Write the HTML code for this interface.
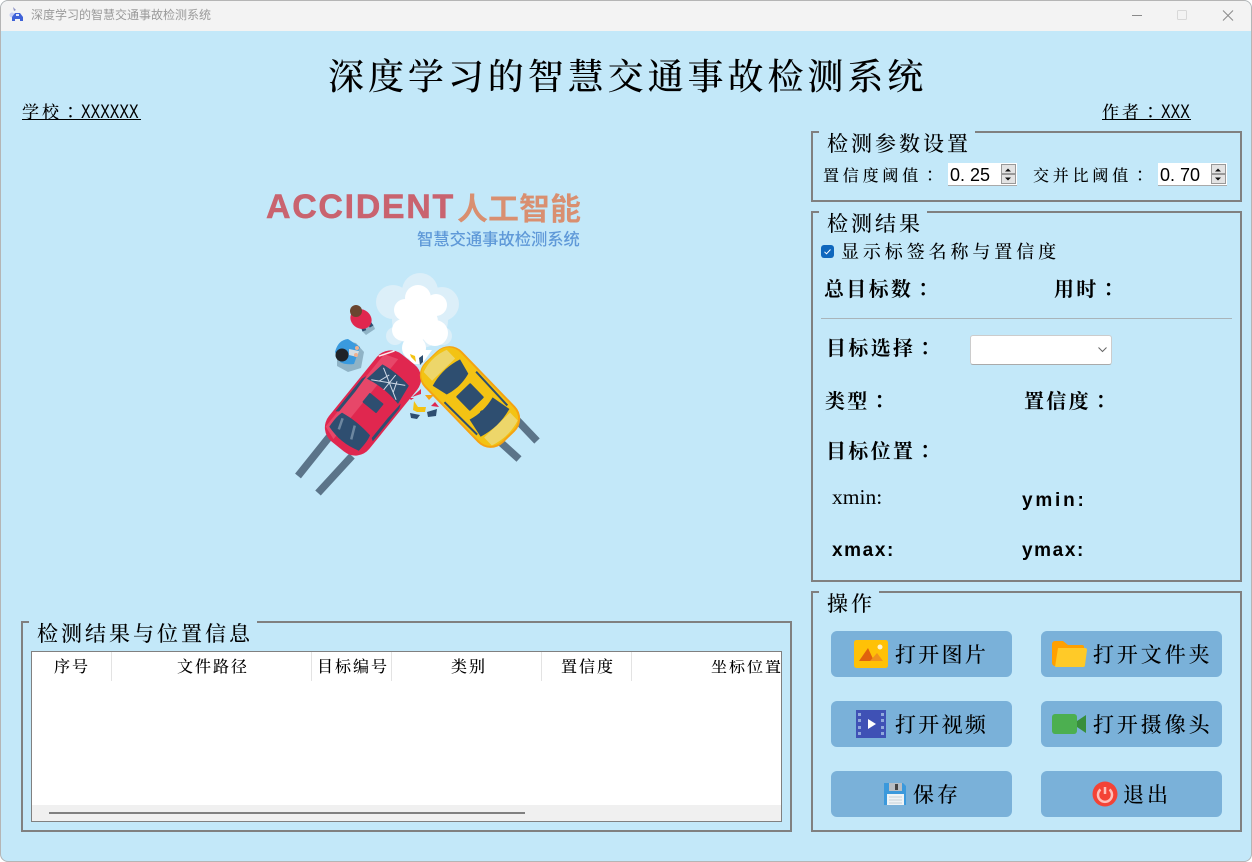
<!DOCTYPE html>
<html><head><meta charset="utf-8"><style>
html,body{margin:0;padding:0;background:#fff;}
#w{position:relative;width:1252px;height:862px;overflow:hidden;background:#c3e8f9;border-radius:8px;box-sizing:border-box;box-shadow:inset 0 0 0 1px #b5b5b5;font-family:"Liberation Serif","Noto Serif CJK SC",serif;font-weight:500;color:#000}
#tb{position:absolute;left:1px;top:1px;width:1250px;height:30px;background:#f3f3f3;border-radius:7px 7px 0 0}
.t{position:absolute;white-space:nowrap;line-height:1}
.b{font-weight:700}
.c{font-family:"Noto Serif CJK TC",serif}
.g{position:absolute;border:2px solid #808080;box-sizing:border-box}
.cap{position:absolute;height:6px;background:#c3e8f9}
.btn{position:absolute;width:181px;height:46px;background:#7ab1d9;border-radius:6px}
.spin{position:absolute;top:163px;width:69px;height:23px;background:#fff;border-bottom:1px solid #aaa;box-sizing:border-box}
.spin i{position:absolute;right:1px;width:15px;height:10px;background:#e3e3e3;border:1px solid #999;box-sizing:border-box}
.sep{position:absolute;top:652px;width:1px;height:29px;background:#e3e3e3}
.h{font-size:16px;letter-spacing:2px;top:660px}
.m{position:absolute;top:102.500px;font-family:"Liberation Mono",monospace;font-size:16px;font-weight:400;line-height:1;transform:scaleY(1.25);transform-origin:0 0}
.l{font-family:"Liberation Sans",sans-serif;font-weight:700;font-size:19px;letter-spacing:1.600px}
.n{font-family:"Liberation Sans",sans-serif;font-weight:400;font-size:18px;top:166px}
svg{position:absolute;overflow:visible}
</style></head><body><div id="w">
<div id="tb"></div>
<svg style="left:9px;top:6px" width="16" height="16" viewBox="0 0 16 16"><path d="M4 1l3 3-2 1z" fill="#8a8fc4"/><circle cx="3" cy="9" r="2.500" fill="#c5cdf5"/><path d="M3 15V11l3-4h5l3 4v4h-3v-2H6v2z" fill="#3f62d8"/><rect x="7" y="8" width="3" height="2" fill="#dfe6ff"/></svg>
<div class="t" style="left:31px;top:9px;font:12px/1 'Liberation Sans','Noto Sans CJK SC',sans-serif;color:#9a9a9a">深度学习的智慧交通事故检测系统</div>
<svg style="left:1130px;top:8px" width="110" height="16"><path d="M2 7.500H12" stroke="#8a8a8a" stroke-width="1"/><rect x="47.500" y="2.500" width="9" height="9" rx="1" fill="none" stroke="#d8d8d8"/><path d="M93 2.500l10 10M103 2.500l-10 10" stroke="#8a8a8a" stroke-width="1"/></svg>

<div class="t" style="left:328px;top:59px;font-size:36px;letter-spacing:3.950px">深度学习的智慧交通事故检测系统</div>
<div class="t" style="left:22px;top:102px;font-size:17px;letter-spacing:3px">学校<span class="c">：</span></div>
<div class="m" style="left:81px">XXXXXX</div>
<div style="position:absolute;left:22px;top:119px;width:119px;height:1px;background:#000"></div>
<div class="t" style="left:1102px;top:102px;font-size:17px;letter-spacing:3px">作者<span class="c">：</span></div>
<div class="m" style="left:1161px">XXX</div>
<div style="position:absolute;left:1102px;top:119px;width:89px;height:1px;background:#000"></div>

<div class="t" style="left:266px;top:190px;font:700 34px/1 'Liberation Sans',sans-serif;letter-spacing:1.650px;color:#c9636f;-webkit-text-stroke:.5px #c9636f">ACCIDENT</div>
<div class="t" style="left:457px;top:191px;font:700 31px/1 'Noto Sans CJK SC',sans-serif;color:#d98f70">人工智能</div>
<div class="t" style="left:417px;top:230px;font:500 16.300px/1 'Noto Sans CJK SC',sans-serif;color:#5f99d8">智慧交通事故检测系统</div>

<svg style="left:0;top:0" width="1252" height="862" viewBox="0 0 1252 862">
 <g fill="#dceff9"><circle cx="420" cy="291" r="18"/><circle cx="393" cy="302" r="17"/><circle cx="442" cy="304" r="17"/><circle cx="395" cy="336" r="9"/><circle cx="443" cy="336" r="9"/><circle cx="420" cy="320" r="28"/></g>
 <g fill="#fff"><circle cx="418" cy="298" r="13"/><circle cx="436" cy="305" r="11"/><circle cx="405" cy="310" r="11"/><circle cx="420" cy="322" r="18"/><circle cx="403" cy="330" r="11"/><circle cx="435" cy="333" r="13"/><circle cx="414" cy="348" r="12"/><path d="M404 350H432L422 364H412z"/></g>
 <g stroke="#5b7489" stroke-width="7.500" fill="none"><path d="M330 436L298 476M352 456L318 493M517 420L537 441M498 440L519 459"/></g>
 <!-- red car -->
 <g transform="translate(373 403) rotate(-51)">
  <rect x="-56" y="-26" width="112" height="52" rx="18" fill="#e0274f"/>
  <path d="M-48 -22L45 -22L50 -8H-53z" fill="#e8506f" opacity=".8"/>
  <path d="M-46 -19C-36 -20 -30 -19 -27 -18C-25 -6 -25 6 -27 18C-30 19 -36 20 -46 19C-50 6 -50 -6 -46 -19z" fill="#2e4e70"/>
  <rect x="-6" y="-9" width="12" height="18" rx="1" fill="#2e4e70"/>
  <path d="M15 -20L36 -17C38 -6 38 6 36 17L15 20C18 6 18 -6 15 -20z" fill="#2e4e70"/>
  <path d="M26 0L17 -16M26 0L34 -14M26 0L17 16M26 0L34 14M17 0H36M21 -9L32 -5M21 9L32 5" stroke="#cfd8e6" stroke-width="1"/>
  <path d="M-30 -24H12L17 -22L-2 -21H-28zM-30 24H12L17 22L-2 21H-28z" fill="#2e4e70"/>
  <path d="M40 -25l14 9" stroke="#fff" stroke-width="1.500" fill="none" opacity=".9"/>
  <path d="M-42 -10L-31 -14M-42 6L-29 0" stroke="#6d87a0" stroke-width="2.500"/>
 </g>
 <!-- yellow car -->
 <g transform="translate(470 397) rotate(46)">
  <rect x="-56" y="-26" width="112" height="52" rx="18" fill="#f5a313"/>
  <rect x="-55" y="-24" width="109" height="48" rx="16" fill="#f3c314"/>
  <path d="M-50 -16H-38V16H-50C-54 6 -54 -6 -50 -16zM39 -18H50C54 -6 54 6 50 18H39z" fill="#edd66a"/>
  <path d="M-34 -19L-18 -15C-15 -5 -15 5 -18 15L-34 19C-38 6 -38 -6 -34 -19z" fill="#2e4e70"/>
  <path d="M16 -16L36 -20C40 -6 40 6 36 20L16 16C19 5 19 -5 16 -16z" fill="#2e4e70"/>
  <rect x="-10" y="-10" width="20" height="20" rx="1" fill="#2e4e70"/>
  <path d="M-14 -22L32 -21M-14 22L32 21" stroke="#2e4e70" stroke-width="2"/>
  <ellipse cx="12" cy="5" rx="2" ry="1.500" fill="#2e4e70" transform="rotate(-90 14 0)"/>
 </g>
 <!-- debris -->
 <path d="M410 354l5 2 1 6-5-5z" fill="#f3c314"/><path d="M419 358l4-3 0 7-3 3z" fill="#2e4e70"/><path d="M421 389l-9 8 9-3z" fill="#e0274f"/><path d="M425 395h9l-5 5z" fill="#f5a313"/><path d="M414 401l4 6h8l-1 5h-8l-4-2z" fill="#f3c314"/><path d="M431 406l4-4 4 5z" fill="#e0274f"/><path d="M410 413l10 2-3 4-6-1z" fill="#2e4e70"/><path d="M427 412l10-3-1 7-8 1z" fill="#2e4e70"/><path d="M414 398l-3 2-2 -2z" fill="#e0274f"/>
 <!-- people -->
 <path d="M362 326l11-2 2 5-9 6-4-4z" fill="#8fb3c6"/>
 <rect x="361" y="324" width="4" height="7" fill="#2e4e70" transform="rotate(-20 363 327)"/><rect x="368" y="321" width="4" height="6" fill="#2e4e70" transform="rotate(-30 370 324)"/>
 <ellipse cx="361" cy="319" rx="11" ry="9.500" fill="#e0274f" transform="rotate(30 361 319)"/>
 <circle cx="356" cy="311" r="6" fill="#6a4530"/>
 <path d="M337 354L345 341L356 343L364 352L361 368L348 372L337 366z" fill="#8fb3c6"/>
 <path d="M335 352Q338 340 348 339L360 347L354 364Q345 365 340 362z" fill="#3a9ade"/>
 <circle cx="342" cy="355" r="6.500" fill="#1f2328"/><path d="M349 349l10 2-2 6-8-2z" fill="#d5dde3"/><circle cx="357" cy="348" r="2" fill="#eeb190"/><circle cx="356" cy="355" r="2" fill="#eeb190"/>
</svg>

<!-- Table group -->
<div class="g" style="left:21px;top:621px;width:771px;height:211px"></div>
<div class="cap" style="left:29px;top:620px;width:228px"></div>
<div class="t" style="left:37px;top:624px;font-size:21px;letter-spacing:3px">检测结果与位置信息</div>
<div style="position:absolute;left:31px;top:651px;width:751px;height:171px;background:#fff;border:1px solid #808080;box-sizing:border-box;overflow:hidden">
 <div style="position:absolute;left:0;bottom:0;width:100%;height:16px;background:#f0f0f0"></div>
 <div style="position:absolute;left:17px;top:160px;width:476px;height:2px;background:#808080"></div>
</div>
<div class="sep" style="left:111px"></div><div class="sep" style="left:311px"></div><div class="sep" style="left:391px"></div><div class="sep" style="left:541px"></div><div class="sep" style="left:631px"></div>
<div class="t h" style="left:54px">序号</div>
<div class="t h" style="left:177px">文件路径</div>
<div class="t h" style="left:317px">目标编号</div>
<div class="t h" style="left:451px">类别</div>
<div class="t h" style="left:561px">置信度</div>
<div class="t h" style="left:711px;width:70px;overflow:hidden">坐标位置</div>

<!-- Params -->
<div class="g" style="left:811px;top:131px;width:431px;height:71px"></div>
<div class="cap" style="left:819px;top:130px;width:156px"></div>
<div class="t" style="left:827px;top:134px;font-size:21px;letter-spacing:3px">检测参数设置</div>
<div class="t" style="left:823px;top:167px;font-size:16px;letter-spacing:3.800px">置信度阈值<span class="c">：</span></div>
<div class="spin" style="left:948px"><i style="top:1px"></i><i style="top:11px"></i></div>
<div class="t n" style="left:950px">0.<span style="margin-left:5px">25</span></div>
<svg style="left:1002px;top:166px" width="12" height="18"><path d="M3 5.500h6l-3-3zM3 11.500h6l-3 3z" fill="#111"/></svg>
<div class="t" style="left:1033px;top:167px;font-size:16px;letter-spacing:3.800px">交并比阈值<span class="c">：</span></div>
<div class="spin" style="left:1158px"><i style="top:1px"></i><i style="top:11px"></i></div>
<div class="t n" style="left:1160px">0.<span style="margin-left:5px">70</span></div>
<svg style="left:1212px;top:166px" width="12" height="18"><path d="M3 5.500h6l-3-3zM3 11.500h6l-3 3z" fill="#111"/></svg>

<!-- Result -->
<div class="g" style="left:811px;top:211px;width:431px;height:371px"></div>
<div class="cap" style="left:819px;top:210px;width:108px"></div>
<div class="t" style="left:827px;top:214px;font-size:21px;letter-spacing:3px">检测结果</div>
<div style="position:absolute;left:821px;top:245px;width:13px;height:13px;border-radius:3px;background:#0f67bd"></div>
<svg style="left:821px;top:245px" width="13" height="13"><path d="M3.500 6.800l2 2 4-4.300" fill="none" stroke="#fff" stroke-width="1"/></svg>
<div class="t" style="left:841px;top:243px;font-size:18px;letter-spacing:3.900px">显示标签名称与置信度</div>
<div class="t b" style="left:824px;top:278px;font-size:20px;letter-spacing:2.300px">总目标数<span class="c">：</span></div>
<div class="t b" style="left:1054px;top:278px;font-size:20px;letter-spacing:2.300px">用时<span class="c">：</span></div>
<div style="position:absolute;left:821px;top:318px;width:411px;height:1px;background:#a9b4ba"></div>
<div class="t b" style="left:826px;top:337px;font-size:20px;letter-spacing:2.300px">目标选择<span class="c">：</span></div>
<div style="position:absolute;left:970px;top:335px;width:142px;height:30px;background:#fff;border:1px solid #ccc;border-bottom-color:#aaa;border-radius:3px;box-sizing:border-box"></div>
<svg style="left:1098px;top:346px" width="10" height="8"><path d="M.5 1.500l4 4 4-4" fill="none" stroke="#666" stroke-width="1"/></svg>
<div class="t b" style="left:825px;top:390px;font-size:20px;letter-spacing:2.300px">类型<span class="c">：</span></div>
<div class="t b" style="left:1024px;top:390px;font-size:20px;letter-spacing:2.300px">置信度<span class="c">：</span></div>
<div class="t b" style="left:826px;top:440px;font-size:20px;letter-spacing:2.300px">目标位置<span class="c">：</span></div>
<div class="t" style="left:832px;top:487px;font:21.500px/1 'Liberation Serif',serif">xmin:</div>
<div class="t l" style="left:1022px;top:491px;letter-spacing:2.800px">ymin:</div>
<div class="t l" style="left:832px;top:541px">xmax:</div>
<div class="t l" style="left:1022px;top:541px">ymax:</div>

<!-- Ops -->
<div class="g" style="left:811px;top:591px;width:431px;height:241px"></div>
<div class="cap" style="left:819px;top:590px;width:60px"></div>
<div class="t" style="left:827px;top:594px;font-size:21px;letter-spacing:3px">操作</div>

<div class="btn" style="left:831px;top:631px"></div><div class="btn" style="left:1041px;top:631px"></div>
<div class="btn" style="left:831px;top:701px"></div><div class="btn" style="left:1041px;top:701px"></div>
<div class="btn" style="left:831px;top:771px"></div><div class="btn" style="left:1041px;top:771px"></div>

<svg style="left:854px;top:640px" width="34" height="28" viewBox="0 0 34 28"><rect width="34" height="28" rx="2.500" fill="#ffc107"/><path d="M5 21L14 8L20 21z" fill="#e0620d"/><path d="M16 21L23 13L29 21z" fill="#f0921c"/><circle cx="26" cy="7" r="2.500" fill="#fff3cf"/></svg>
<svg style="left:1052px;top:640px" width="36" height="28" viewBox="0 0 36 28"><path d="M0 4a3 3 0 0 1 3-3H11L16 5H30a2 2 0 0 1 2 2V26H3a3 3 0 0 1-3-3z" fill="#ffa000"/><path d="M6 8H33a2 2 0 0 1 2 2L33 25a2 2 0 0 1-2 2H3z" fill="#ffca28"/></svg>
<svg style="left:856px;top:710px" width="30" height="28" viewBox="0 0 30 28"><rect width="30" height="28" fill="#3f51b5"/><g fill="#8fa8dc"><rect x="2" y="3" width="3" height="3"/><rect x="2" y="9" width="3" height="3"/><rect x="2" y="16" width="3" height="3"/><rect x="2" y="22" width="3" height="3"/><rect x="25" y="3" width="3" height="3"/><rect x="25" y="9" width="3" height="3"/><rect x="25" y="16" width="3" height="3"/><rect x="25" y="22" width="3" height="3"/></g><path d="M12 9L20 14 12 19z" fill="#fff"/></svg>
<svg style="left:1052px;top:714px" width="34" height="20" viewBox="0 0 34 20"><rect width="25" height="20" rx="3" fill="#4caf50"/><path d="M25 7L34 1V19L25 13z" fill="#388e3c"/></svg>
<svg style="left:884px;top:783px" width="22" height="22" viewBox="0 0 22 22"><path d="M0 0H19L22 3V22H0z" fill="#3b99dc"/><rect x="5" y="0" width="13" height="8" fill="#b8bec4"/><rect x="11" y="1" width="3" height="6" fill="#444"/><rect x="3" y="11" width="17" height="11" fill="#eef3f6"/><path d="M5 14H18M5 17H18M5 20H18" stroke="#c7d1d8"/></svg>
<svg style="left:1092px;top:781px" width="26" height="26" viewBox="0 0 26 26"><circle cx="13" cy="13" r="12.500" fill="#f44336"/><path d="M8.500 8.500A7 7 0 1 0 17.500 8.500" fill="none" stroke="#ffc0ba" stroke-width="2.500"/><path d="M13 6V13" stroke="#ffc0ba" stroke-width="2.500"/></svg>

<div class="t" style="left:895px;top:645px;font-size:21px;letter-spacing:2.300px">打开图片</div>
<div class="t" style="left:1093px;top:645px;font-size:21px;letter-spacing:2.900px">打开文件夹</div>
<div class="t" style="left:895px;top:715px;font-size:21px;letter-spacing:2.300px">打开视频</div>
<div class="t" style="left:1093px;top:715px;font-size:21px;letter-spacing:2.900px">打开摄像头</div>
<div class="t" style="left:913px;top:785px;font-size:21px;letter-spacing:3px">保存</div>
<div class="t" style="left:1123px;top:785px;font-size:21px;letter-spacing:3px">退出</div>
</div></body></html>
